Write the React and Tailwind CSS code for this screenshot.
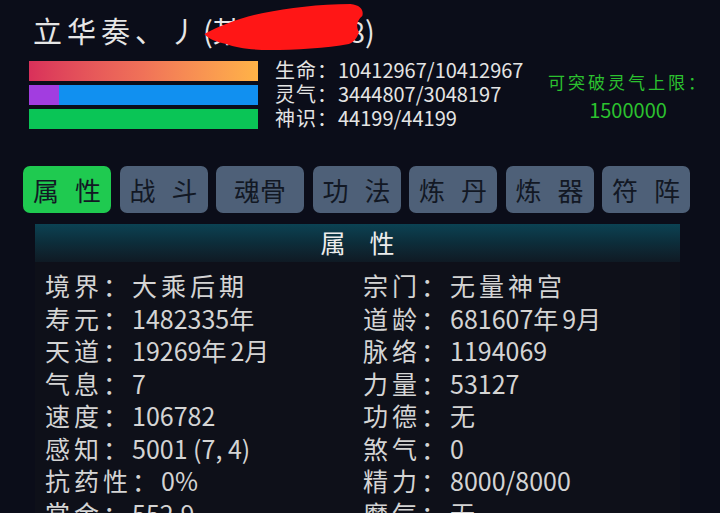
import React from "react"

const CJK = /[\u3000-\u303f\u4e00-\u9fff\uff00-\uffef]/

function Mixed({ text, cjk }) {
  return text.split(/([\u3000-\u303f\u4e00-\u9fff\uff00-\uffef]+)/).map((part, i) =>
    CJK.test(part) ? <span key={i} className={cjk}>{part}</span> : <span key={i}>{part}</span>
  )
}

const tabs = [
  ["属", "性"],
  ["战", "斗"],
  ["魂骨"],
  ["功", "法"],
  ["炼", "丹"],
  ["炼", "器"],
  ["符", "阵"]
]

const left = [
  "境界：大乘后期",
  "寿元：1482335年",
  "天道：19269年2月",
  "气息：7",
  "速度：106782",
  "感知：5001 (7, 4)",
  "抗药性：0%",
  "赏金：552.9"
]

const right = [
  "宗门：无量神宫",
  "道龄：681607年9月",
  "脉络：1194069",
  "力量：53127",
  "功德：无",
  "煞气：0",
  "精力：8000/8000",
  "魔气：无"
]

export default function App() {
  return (
    <div
      className="relative h-[513px] w-[720px] overflow-hidden bg-[#0b0d19] text-[#dcdcdc]"
      style={{ fontFamily: '"Noto Sans CJK SC", "Noto Sans", sans-serif' }}
    >
      <div className="relative ml-[33px] mt-[12px] h-[36px] whitespace-nowrap text-[29px] leading-[36px] text-[#e6e6e6]">
        <Mixed text="立华奏、丿(某某某某8)" cjk="tracking-[5px]" />
        <svg
          className="absolute left-[168px] top-[-10px]"
          width="168"
          height="50"
          viewBox="0 0 200 50"
          preserveAspectRatio="none"
        >
          <path
            d="M4 32 C22 24 44 16 74 11 C104 6 140 2 178 2 C190 3 194 8 192 14 C186 18 184 24 188 30 C186 36 182 40 176 42 C150 46 112 48 82 48 C60 48 42 46 30 42 C20 40 10 38 4 32 Z"
            fill="#ff1616"
          />
        </svg>
      </div>

      <div className="mt-[10px] flex items-start">
        <div className="ml-[29px] mt-[3px] flex w-[229px] flex-col gap-[4px]">
          <div className="h-[20px] bg-gradient-to-r from-[#d9305a] via-[#f07258] to-[#ffb347]" />
          <div className="flex h-[20px] bg-[#1190f0]">
            <div className="w-[30px] bg-[#a23de0]" />
          </div>
          <div className="h-[20px] bg-[#0ac556]" />
        </div>

        <div className="ml-[17px] flex flex-col text-[20px] leading-[24px] text-[#e4e4e4]">
          <div><Mixed text="生命：10412967/10412967" cjk="tracking-[1px]" /></div>
          <div><Mixed text="灵气：3444807/3048197" cjk="tracking-[1px]" /></div>
          <div><Mixed text="神识：44199/44199" cjk="tracking-[1px]" /></div>
        </div>

        <div className="ml-auto mr-[12px] mt-[10px] flex flex-col items-center leading-[28px] text-[#2bc12f]">
          <div className="text-[17px] tracking-[3px]">可突破灵气上限：</div>
          <div className="text-[20px]">1500000</div>
        </div>
      </div>

      <div className="ml-[23px] mt-[36px] flex gap-[8.5px]">
        {tabs.map((t, i) => (
          <div
            key={i}
            className={
              "flex h-[47px] w-[88px] items-center justify-center gap-[16px] rounded-[7px] text-[26px] text-[#121824] " +
              (i === 0 ? "bg-[#1fca50]" : "bg-[#4e6078]")
            }
          >
            {t.map((c) => (
              <span key={c}>{c}</span>
            ))}
          </div>
        ))}
      </div>

      <div className="ml-[35px] mt-[11px] w-[645px] bg-[#0e1019]">
        <div className="flex h-[38px] items-center justify-center gap-[24px] bg-gradient-to-b from-[#0b4253] via-[#0c2d3a] to-[#0f1a24] text-[25px] text-[#ececec]">
          <span>属</span>
          <span>性</span>
        </div>
        <div className="grid grid-cols-[318px_1fr] pl-[10px] pt-[7px] text-[25px] leading-[32.5px] text-[#d4d4d4]">
          {left.map((l, i) => (
            <React.Fragment key={i}>
              <div className="whitespace-nowrap"><Mixed text={l} cjk="tracking-[4px]" /></div>
              <div className="whitespace-nowrap"><Mixed text={right[i]} cjk="tracking-[4px]" /></div>
            </React.Fragment>
          ))}
        </div>
      </div>
    </div>
  )
}
